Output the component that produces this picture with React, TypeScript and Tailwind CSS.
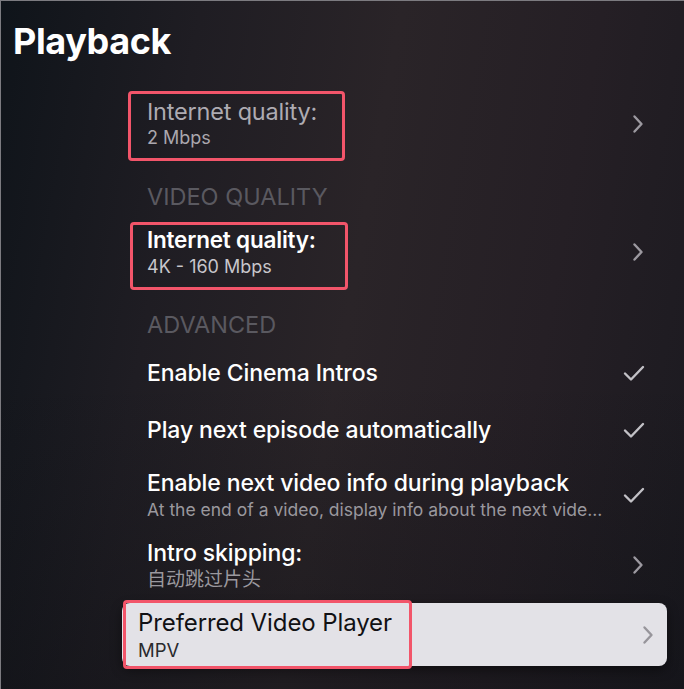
import React from "react";

const FONT = { fontFamily: "Inter, 'Noto Sans CJK SC', sans-serif" };

function Chevron({ color = "#9c99a0" }: { color?: string }) {
  return (
    <svg width="12" height="20" viewBox="0 0 12 20" fill="none">
      <path d="M2.5 2.5 L9.5 10 L2.5 17.5" stroke={color} strokeWidth="2.4" strokeLinecap="round" strokeLinejoin="round" />
    </svg>
  );
}

function Check() {
  return (
    <svg width="22" height="18" viewBox="0 0 22 18" fill="none">
      <path d="M2 9.5 L8 15.5 L20 3" stroke="#c2c1c6" strokeWidth="2.4" strokeLinecap="round" strokeLinejoin="round" />
    </svg>
  );
}

function RedBox({ cls }: { cls: string }) {
  return <div className={`pointer-events-none absolute rounded-[4px] border-[3px] border-[#f2556a] ${cls}`} />;
}

export default function App() {
  return (
    <div
      className="w-[684px] h-[689px] overflow-hidden border-t border-l border-[#7c7b80] bg-[linear-gradient(100deg,#0f141a_0%,#1f1d23_25%,#2a2428_50%,#251f25_75%,#1b1a20_100%)]"
      style={FONT}
    >
      <div className="h-full w-full bg-[linear-gradient(180deg,rgba(0,0,0,0)_0%,rgba(0,0,0,0)_55%,rgba(10,12,16,0.35)_100%)] pt-[20px]">
        <div className="pl-[12px] text-[36px] leading-[40px] font-bold text-white tracking-[-0.4px]">Playback</div>

        <div className="ml-[121px] w-[545px] flex flex-col">
          {/* Row 1 */}
          <div className="relative mt-[37px] flex items-center justify-between pl-[25px] pr-[23px]">
            <div className="flex flex-col">
              <div className="text-[23.5px] leading-[28px] text-[#aeabb2] tracking-[-0.2px]">Internet quality:</div>
              <div className="mt-[1px] text-[18px] leading-[22px] text-[#aaa7ae]">2 Mbps</div>
            </div>
            <Chevron />
            <RedBox cls="left-[6px] top-[-7px] w-[217px] h-[70px]" />
          </div>

          <div className="mt-[34px] pl-[25px] text-[23.5px] leading-[28px] text-[#5a5960]">VIDEO QUALITY</div>

          {/* Row 2 */}
          <div className="relative mt-[15px] flex items-center justify-between pl-[25px] pr-[23px]">
            <div className="flex flex-col">
              <div className="text-[22.5px] leading-[28px] font-semibold text-white tracking-[-0.2px]">Internet quality:</div>
              <div className="mt-[2px] text-[18px] leading-[22px] text-[#c8c6cb]">4K - 160 Mbps</div>
            </div>
            <Chevron />
            <RedBox cls="left-[8px] top-[-4px] w-[218px] h-[68px]" />
          </div>

          <div className="mt-[33px] pl-[25px] text-[23.5px] leading-[28px] text-[#5a5960]">ADVANCED</div>

          <div className="mt-[20px] flex items-center justify-between pl-[25px] pr-[22px]">
            <div className="text-[23px] leading-[28px] font-medium text-white tracking-[-0.1px]">Enable Cinema Intros</div>
            <Check />
          </div>

          <div className="mt-[29px] flex items-center justify-between pl-[25px] pr-[22px]">
            <div className="text-[23px] leading-[28px] font-medium text-white tracking-[-0.1px]">Play next episode automatically</div>
            <Check />
          </div>

          <div className="mt-[25px] flex items-center justify-between pl-[25px] pr-[22px]">
            <div className="flex flex-col">
              <div className="text-[23px] leading-[28px] font-medium text-white tracking-[-0.1px]">Enable next video info during playback</div>
              <div className="mt-[2px] text-[17.5px] leading-[22px] text-[#9a989e]">At the end of a video, display info about the next vide...</div>
            </div>
            <Check />
          </div>

          <div className="mt-[18px] flex items-center justify-between pl-[25px] pr-[23px]">
            <div className="flex flex-col">
              <div className="text-[23px] leading-[28px] font-medium text-white tracking-[-0.1px]">Intro skipping:</div>
              <div className="mt-[2px] text-[19px] leading-[22px] text-[#9a989e]">自动跳过片头</div>
            </div>
            <Chevron />
          </div>

          {/* Focused card */}
          <div className="relative mt-[12px] flex h-[63px] items-center justify-between rounded-[8px] bg-[#e3e2e7] pl-[16px] pr-[13px] shadow-[0_4px_12px_rgba(0,0,0,0.45)]">
            <div className="flex flex-col">
              <div className="text-[24px] leading-[28px] text-[#111114] tracking-[-0.1px]">Preferred Video Player</div>
              <div className="mt-[2px] text-[18.5px] leading-[22px] text-[#2a2a2e]">MPV</div>
            </div>
            <Chevron color="#97959b" />
            <RedBox cls="left-[1px] top-[-3px] w-[289px] h-[69px]" />
          </div>
        </div>
      </div>
    </div>
  );
}
